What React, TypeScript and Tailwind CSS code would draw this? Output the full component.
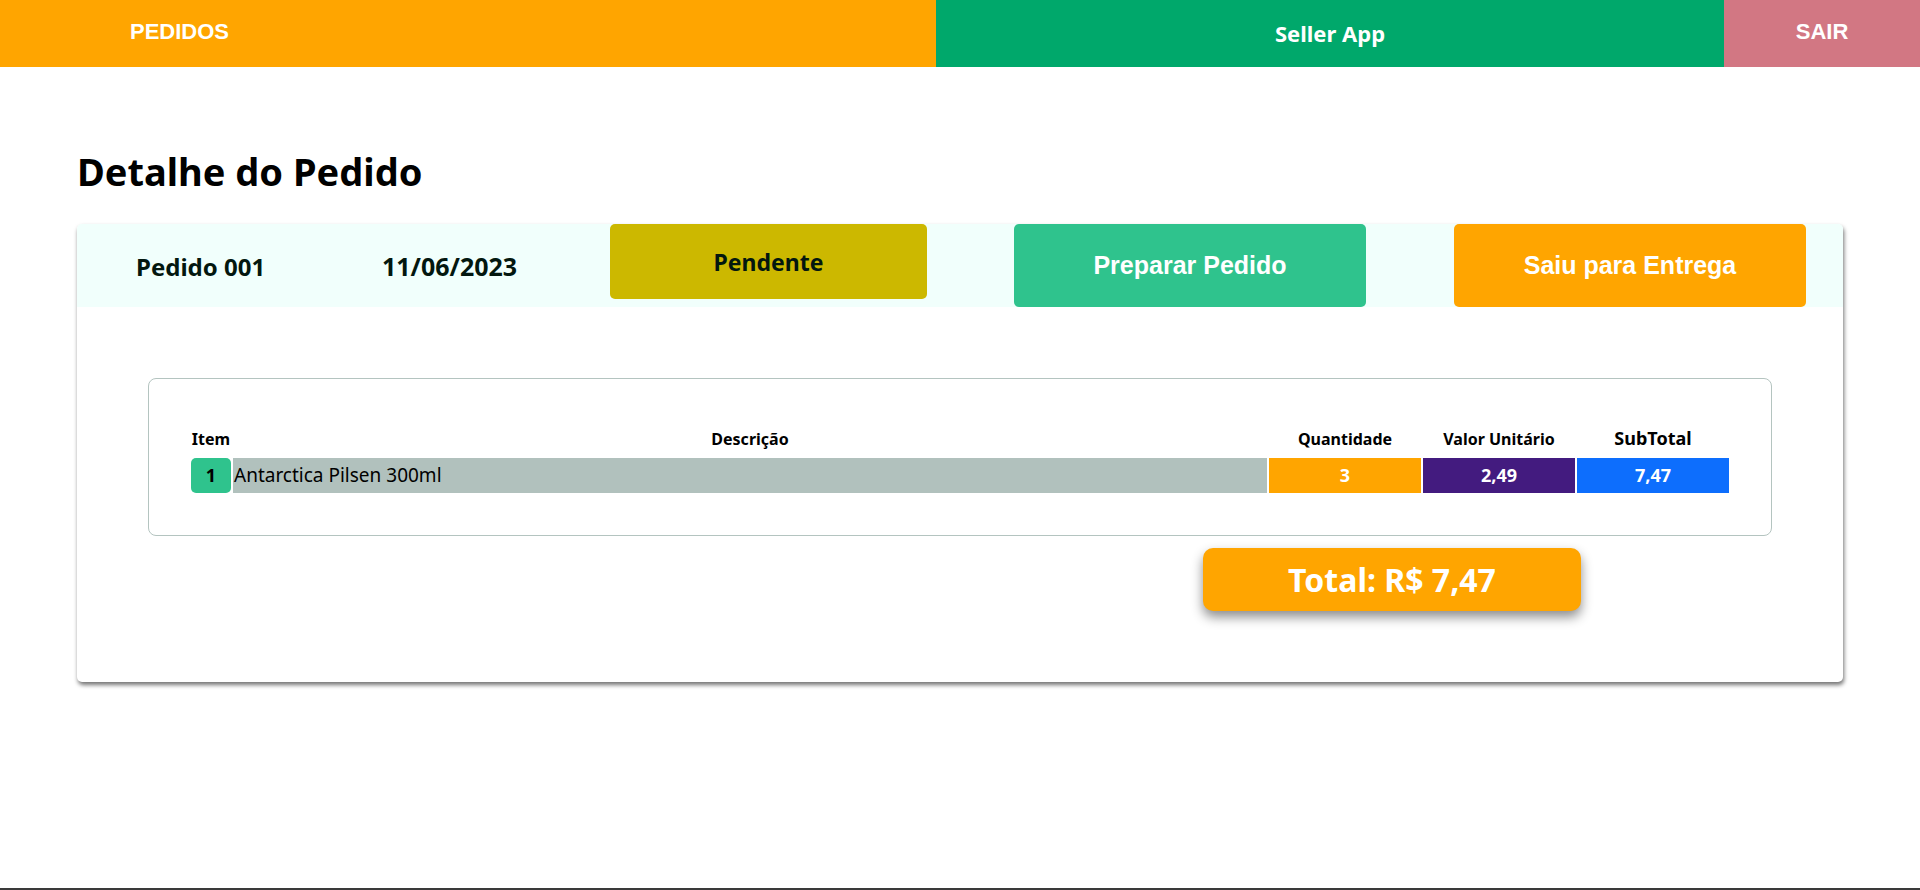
import React from "react";

const ITEMS = [
  { id: 1, description: "Antarctica Pilsen 300ml", quantity: 3, unit: "2,49", subtotal: "7,47" },
];

function NavBar() {
  return (
    <nav className="flex h-[67px] text-white font-bold">
      <div className="flex w-[936px] items-center bg-[#ffa500] pl-[130px] pb-[4px] font-['Liberation_Sans',Arial,sans-serif] text-[22px]">
        PEDIDOS
      </div>
      <div className="flex flex-1 items-center justify-center bg-[#00a86b] font-['Noto_Sans',sans-serif] text-[22px]">
        Seller App
      </div>
      <div className="flex w-[196px] items-center justify-center bg-[#d27783] pb-[4px] font-['Liberation_Sans',Arial,sans-serif] text-[22px]">
        SAIR
      </div>
    </nav>
  );
}

function OrderHeader() {
  return (
    <div className="flex h-[83px] items-stretch bg-[#f1fffc] text-[#03170f]">
      <div className="flex w-[305px] items-center pl-[59px] pt-[2px] text-[24px] font-bold">Pedido 001</div>
      <div className="flex w-[228px] items-center pt-[2px] text-[25px] font-bold">11/06/2023</div>
      <div className="flex h-[75px] w-[317px] items-center justify-center rounded-[5px] bg-[#ccb800] pt-[1px] text-[23px] font-bold">
        Pendente
      </div>
      <button className="ml-[87px] w-[352px] rounded-[5px] bg-[#2fc38d] font-['Liberation_Sans',Arial,sans-serif] text-[25px] font-bold text-white">
        Preparar Pedido
      </button>
      <button className="ml-[88px] w-[352px] rounded-[5px] bg-[#ffa500] font-['Liberation_Sans',Arial,sans-serif] text-[25px] font-bold text-white">
        Saiu para Entrega
      </button>
    </div>
  );
}

function ItemsTable() {
  return (
    <div className="mx-[71px] mt-[71px] rounded-[8px] border border-[#b4c4c0] p-[40px]">
      <table className="w-full border-separate border-spacing-[2px]">
        <thead>
          <tr className="h-[35px]">
            <th className="w-[40px] text-[16px] font-bold">Item</th>
            <th className="text-[16px] font-bold">Descrição</th>
            <th className="w-[152px] text-[16px] font-bold">Quantidade</th>
            <th className="w-[152px] text-[16px] font-bold">Valor Unitário</th>
            <th className="w-[152px] text-[18px] font-bold">SubTotal</th>
          </tr>
        </thead>
        <tbody>
          {ITEMS.map((it) => (
            <tr key={it.id} className="h-[35px] text-[19px]">
              <td className="rounded-[5px] bg-[#2fc38d] text-center text-[18px] font-bold">{it.id}</td>
              <td className="bg-[#b1c1bd] px-[1px] text-left">{it.description}</td>
              <td className="bg-[#ffa500] text-center text-[18px] font-bold text-white">{it.quantity}</td>
              <td className="bg-[#431b7f] text-center text-[18px] font-bold text-white">{it.unit}</td>
              <td className="bg-[#0d6efd] text-center text-[18px] font-bold text-white">{it.subtotal}</td>
            </tr>
          ))}
        </tbody>
      </table>
    </div>
  );
}

export default function App() {
  return (
    <div className="flex min-h-[890px] flex-col bg-white font-['Noto_Sans',sans-serif] text-black">
      <NavBar />
      <main className="px-[77px]">
        <h1 className="mt-[80px] mb-[29px] text-[38px] leading-[48px] font-bold">Detalhe do Pedido</h1>

        <div className="overflow-hidden rounded-[5px] bg-white pb-[71px] shadow-[1px_3px_4px_rgba(0,0,0,0.55)]">
          <OrderHeader />
          <ItemsTable />
          <div className="mt-[12px] flex justify-end pr-[262px]">
            <div className="flex h-[63px] w-[378px] items-center justify-center rounded-[10px] bg-[#ffa500] text-[32px] font-bold text-white shadow-[0_6px_12px_rgba(0,0,0,0.45)]">
              Total: R$ 7,47
            </div>
          </div>
        </div>
      </main>
      <footer className="mt-auto h-[2px] bg-[#3a3a3a]" />
    </div>
  );
}
